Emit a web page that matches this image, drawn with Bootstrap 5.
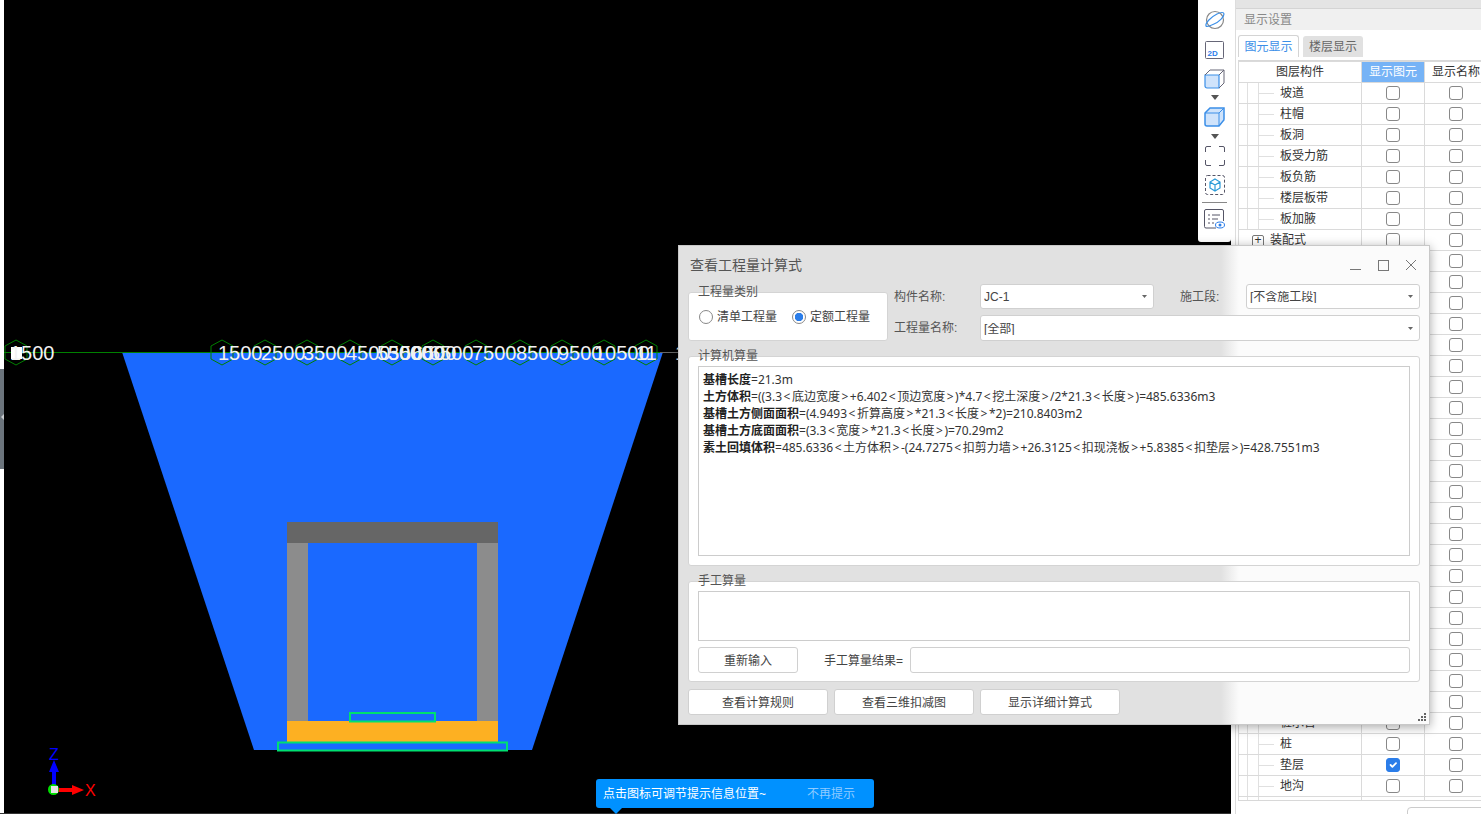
<!DOCTYPE html>
<html lang="zh">

<head>
    <meta charset="UTF-8" />
    <meta name="viewport" content="width=device-width, initial-scale=1" />
    <title>查看工程量计算式</title>
    <link href="https://cdn.jsdelivr.net/npm/bootstrap@5.3.0/dist/css/bootstrap.min.css" rel="stylesheet" />
    <style>
        body { font-family: "Liberation Sans", "Noto Sans CJK SC", sans-serif; font-size: 12px; color: #333; background: #000; overflow: hidden; height: 814px; }
        .edge-strip { width: 4px; background: #fff; height: 813px; padding-top: 369px; flex: none; }
        .edge-handle { height: 100px; background: #6c757d; position: relative; }
        .edge-handle::after { content: ""; position: absolute; left: 1px; top: 45px; border: 3px solid transparent; border-right: 3px solid #c8ccd0; border-left: 0; }
        .cad-area { width: 1194px; height: 813px; flex: none; }
        .cad-area svg { display: block; }
        .axis-num { font: 20px "Liberation Sans", sans-serif; fill: #f2f2f2; }
        .side-tools { width: 33px; height: 242px; flex: none; background: #fff; border-radius: 0 0 3px 3px; padding-top: 8px; }
        .side-tools svg { display: block; margin-left: auto; margin-right: auto; flex: none; }
        .tool-m6 { margin-top: 6px; }
        .tool-m7 { margin-top: 7px; }
        .tool-m9 { margin-top: 9px; }
        .tool-m10 { margin-top: 10px; }
        .tool-sep { border-top: 1px solid #888; margin: 7px 4px 0; }
        .side-panel { width: 250px; flex: none; height: 814px; background: #fff; padding-left: 4px; overflow: hidden; }
        .panel-inner { border-left: 1px solid #ddd; height: 814px; width: 246px; }
        .panel-top { height: 9px; background: #e4e4e4; border-bottom: 1px solid #d4d4d4; }
        .panel-head { height: 21px; line-height: 22px; background: #f0f0f0; color: #888; padding-left: 8px; }
        .tab-row { margin: 5px 0 3px 2px; height: 22px; }
        .tab-on, .tab-off { width: 61px; text-align: center; line-height: 23px; border-radius: 3px 3px 0 0; }
        .tab-on { border: 1px solid #d4d4d4; border-bottom: 0; color: #3b8fe8; }
        .tab-off { width: 60px; margin-top: 1px; line-height: 23px; background: #e1e1e1; color: #666; }
        .tree-box { margin-left: 2px; width: 260px; height: 741px; overflow: hidden; border-top: 1px solid #d8d8d8; border-bottom: 1px solid #d8d8d8; }
        .tree-table { table-layout: fixed; width: 249px; font-size: 12px; color: #333; --bs-table-border-color: #dadada; }
        .tree-table td, .tree-table th { height: 21px; padding: 0; line-height: 20px; font-weight: 400; vertical-align: middle; }
        .tree-head-on { background: #76b3f6 !important; --bs-table-bg: #76b3f6; color: #fff !important; text-align: center; }
        .tree-leaf { padding-left: 41px !important; background-image: linear-gradient(#e0e0e0, #e0e0e0), linear-gradient(#e0e0e0, #e0e0e0), linear-gradient(#e0e0e0, #e0e0e0); background-repeat: no-repeat; background-size: 1px 100%, 1px 100%, 16px 1px; background-position: 8px 0, 19px 0, 19px 50%; }
        .tree-root { padding-left: 13px !important; }
        .plus-box { display: inline-block; width: 12px; height: 12px; line-height: 9px; border: 1px solid #777; border-radius: 2px; text-align: center; margin-right: 6px; vertical-align: 0; font-size: 12px; }
        .tick-box { width: 14px; height: 14px; margin: -1px auto 0; border: 1px solid #888; border-radius: 3px; display: block; }
        .tick-box:checked { background-color: #2b7de9; border-color: #2b7de9; }
        .panel-btn { margin: 6px 0 0 171px; width: 80px; height: 20px; border: 1px solid #ccc; border-radius: 4px; }
        .calc-dialog { position: absolute; left: 678px; top: 245px; width: 752px; height: 480px; border: 1px solid #c8c8c8; box-shadow: 0 2px 10px rgba(0, 0, 0, .35); background: linear-gradient(90deg, #e1e1e1 542px, #fbfbfb 560px); color: #444; }
        .dlg-title { height: 38px; padding: 0 4px 0 11px; font-size: 14px; color: #555; }
        .dlg-body { padding: 0 9px; }
        .win-btn { width: 28px; text-align: center; }
        .win-btn svg { display: block; margin: 0 auto; }
        .top-block { height: 57px; gap: 6px; }
        .grp { background: #fff; border: 1px solid #d4d4d4; border-radius: 3px; padding: 9px; }
        .grp-title { display: block; width: fit-content; line-height: 16px; margin: -18px 0 2px; color: #555; }
        .grp-type { width: 200px; height: 49px; margin-top: 8px; flex: none; }
        .radio-line { height: 28px; gap: 15px; padding: 2px 0 0 1px; }
        .radio-line label { display: flex; align-items: center; gap: 4px; color: #444; }
        .dot-radio { width: 14px; height: 14px; margin: 0; border: 1px solid #888; }
        .dot-radio:checked { background-color: #fff; border-color: #888; background-image: radial-gradient(circle, #2b7de9 0 4px, transparent 4.5px); }
        .field-col { flex: 1; gap: 6px; }
        .field-row { height: 25px; }
        .field-row + .field-row { height: 26px; }
        .field-name { width: 86px; flex: none; color: #555; }
        .field-name-2 { width: 66px; padding-left: 26px; box-sizing: content-box; color: #555; flex: none; }
        .combo { height: 100%; padding: 1px 3px 0; font-size: 12px; line-height: 1; color: #444; border: 1px solid #d0d0d0; border-radius: 3px; background-size: 5px 3px; background-position: right 6px center; background-image: url("data:image/svg+xml,%3csvg xmlns='http://www.w3.org/2000/svg' viewBox='0 0 7 4'%3e%3cpath fill='%23666' d='M0 0h7L3.500 4z'/%3e%3c/svg%3e"); }
        .combo-short { width: 174px; flex: none; }
        .grp-calc { height: 210px; margin-top: 15px; }
        .calc-text { height: 190px; border: 1px solid #ccc; padding: 4px 4px; line-height: 17px; color: #333; white-space: nowrap; overflow: hidden; background: #fff; font-family: "Noto Sans", "Noto Sans CJK SC", sans-serif; }
        .calc-text b { color: #222; }
        .ang { padding: 0 1.500px; }
        .grp-hand { height: 101px; margin-top: 15px; }
        .hand-box { height: 50px; border: 1px solid #ccc; }
        .hand-row { height: 26px; margin-top: 6px; }
        .plain-btn { --bs-btn-font-size: 12px; --bs-btn-padding-y: 0; --bs-btn-padding-x: 0; --bs-btn-color: #444; --bs-btn-border-color: #d0d0d0; --bs-btn-bg: #fff; --bs-btn-border-radius: 3px; height: 26px; padding-top: 2px; }
        .hand-btn { width: 100px; }
        .hand-label { margin-left: 26px; width: 86px; padding-top: 1px; }
        .hand-input { flex: 1; border: 1px solid #d0d0d0; border-radius: 3px; height: 26px; background: #fff; }
        .foot-row { margin-top: 7px; gap: 6px; }
        .foot-btn { width: 140px; }
        .grip { position: absolute; right: 3px; bottom: 3px; display: block; }
        .tip-bar { position: absolute; left: 596px; top: 779px; width: 278px; height: 29px; background: #0091ff; border-radius: 3px; color: #fff; padding-left: 7px; }
        .tip-bar::after { content: ""; position: absolute; left: 14px; top: 29px; border: 6px solid transparent; border-top: 6px solid #0091ff; border-bottom: 0; }
        .tip-off { margin-left: auto; margin-right: 19px; color: #8fcbff; }
        .base-line { position: absolute; left: 0; top: 813px; width: 1231px; height: 1px; background: #333; }
    </style>
</head>

<body>
    <div class="d-flex">
        <div class="edge-strip"><div class="edge-handle"></div></div>

        <div class="cad-area">
            <svg width="1194" height="813" viewBox="4 0 1194 813">
                <rect x="4" y="0" width="1194" height="813" fill="#000" />
                <polygon points="122,352 663,352 532,750 254,750" fill="#1a69ff" />
                <line x1="109" y1="352.500" x2="678" y2="352.500" stroke="#666" />
                <line x1="4" y1="352.500" x2="660" y2="352.500" stroke="#008000" />
                <rect x="287" y="522" width="211" height="21" fill="#666" />
                <rect x="287" y="543" width="21" height="178" fill="#8c8c8c" />
                <rect x="477" y="543" width="21" height="178" fill="#8c8c8c" />
                <rect x="287" y="721" width="211" height="21" fill="#fdb022" />
                <rect x="350" y="713" width="85" height="8.500" fill="none" stroke="#00e070" stroke-width="2" />
                <rect x="278" y="742.500" width="229" height="8" fill="none" stroke="#00e070" stroke-width="2" />
                <g id="axisBubbles" fill="none" stroke="#008000"></g>
                <rect x="11" y="347" width="11" height="12" fill="#fff" />
                <g id="axisLabels"></g>
                <g>
                    <rect x="52" y="770" width="4" height="15" fill="#00f" />
                    <polygon points="54,760 59,772 49,772" fill="#00f" />
                    <rect x="57" y="788" width="16" height="4" fill="#f00" />
                    <polygon points="84,790 72,785 72,795" fill="#f00" />
                    <circle cx="53.500" cy="789.500" r="5.500" fill="#00e000" />
                    <rect x="51" y="786" width="7" height="7" fill="#e4e4e4" />
                    <text x="49" y="760" font-size="16" fill="#00f" font-family="Liberation Sans">Z</text>
                    <text x="85" y="796" font-size="16" fill="#f00" font-family="Liberation Sans">X</text>
                </g>
            </svg>
        </div>

        <div class="side-tools d-flex flex-column">
            <svg width="24" height="24" viewBox="0 0 24 24" fill="none">
                <circle cx="12" cy="12" r="8.500" stroke="#888" stroke-width="1.200" />
                <path d="M3 18C2 15 8 9 14 6c4-2 7-2 7 0 0 3-5 8-10 10-4 2-7 3-8 2z" stroke="#3b8fe8" stroke-width="1.200" />
            </svg>
            <svg class="tool-m9" width="20" height="18" viewBox="0 0 20 18" fill="none">
                <rect x=".5" y=".5" width="18" height="17" rx="1" stroke="#667" />
                <text x="2.500" y="14.500" font-size="8" font-weight="700" fill="#2b7de9" font-family="Liberation Sans">2D</text>
            </svg>
            <svg class="tool-m10" width="22" height="20" viewBox="0 0 22 20" fill="none">
                <path d="M1 6h14v13H3a2 2 0 0 1-2-2z" fill="#cfe3fb" stroke="#3b8fe8" stroke-width="1.200" />
                <path d="M1 6l5-5h14v13l-5 5M15 6l5-5" stroke="#667" />
            </svg>
            <svg class="tool-m6" width="8" height="5" viewBox="0 0 8 5"><path d="M0 0h8L4 5z" fill="#555" /></svg>
            <svg class="tool-m7" width="22" height="20" viewBox="0 0 22 20" fill="none">
                <path d="M1 6l5-5h14v11a2 2 0 0 1-1 2l-4 5H3a2 2 0 0 1-2-2z" fill="#cfe3fb" stroke="#3b8fe8" stroke-width="1.500" />
                <path d="M1 6h14v13M15 6l5-5" stroke="#3b8fe8" />
            </svg>
            <svg class="tool-m7" width="8" height="5" viewBox="0 0 8 5"><path d="M0 0h8L4 5z" fill="#555" /></svg>
            <svg class="tool-m7" width="20" height="20" viewBox="0 0 20 20" fill="none" stroke="#556">
                <path d="M.5 6V2A1.500 1.500 0 0 1 2 .5h4M14 .5h4A1.500 1.500 0 0 1 19.500 2v4M19.500 14v4a1.500 1.500 0 0 1-1.500 1.500h-4M6 19.500H2A1.500 1.500 0 0 1 .5 18v-4" />
            </svg>
            <svg class="tool-m9" width="20" height="20" viewBox="0 0 20 20" fill="none">
                <rect x=".5" y=".5" width="19" height="19" rx="2" stroke="#556" stroke-dasharray="3 2" />
                <path d="M10 4l5 3v6l-5 3-5-3V7zM5 7l5 3 5-3M10 10v6" stroke="#2b9bd8" stroke-width="1.200" />
            </svg>
            <div class="tool-sep"></div>
            <svg class="tool-m6" width="21" height="20" viewBox="0 0 21 20" fill="none">
                <path d="M12 19H2a1.500 1.500 0 0 1-1.500-1.500V2A1.500 1.500 0 0 1 2 .5h16A1.500 1.500 0 0 1 19.500 2v10" stroke="#556" />
                <path d="M4 6h2M8 6h8M4 10h2M8 10h6M4 14h2M8 14h2" stroke="#556" />
                <ellipse cx="16" cy="16" rx="4.500" ry="3" fill="#fff" stroke="#2b7de9" />
                <circle cx="16" cy="16" r="1.500" fill="#2b7de9" />
            </svg>
        </div>

        <div class="side-panel">
            <div class="panel-inner">
                <div class="panel-top"></div>
                <div class="panel-head">显示设置</div>
                <div class="tab-row d-flex gap-1">
                    <div class="tab-on">图元显示</div>
                    <div class="tab-off">楼层显示</div>
                </div>
                <div class="tree-box">
                    <table class="table table-bordered mb-0 tree-table">
                        <colgroup><col style="width:123px"><col style="width:63px"><col style="width:63px"></colgroup>
                        <thead>
                            <tr>
                                <th class="text-center">图层构件</th>
                                <th class="tree-head-on">显示图元</th>
                                <th class="text-center">显示名称</th>
                            </tr>
                        </thead>
                        <tbody id="treeRows"></tbody>
                    </table>
                </div>
                <div class="panel-btn"></div>
            </div>
        </div>
    </div>
    <div class="base-line"></div>

    <div class="calc-dialog">
        <div class="dlg-title d-flex align-items-center">
            <span class="me-auto">查看工程量计算式</span>
            <span class="win-btn"><svg width="11" height="11" viewBox="0 0 11 11"><path d="M0 9.500h11" stroke="#777" /></svg></span>
            <span class="win-btn"><svg width="11" height="11" viewBox="0 0 11 11"><rect x=".5" y=".5" width="10" height="10" fill="none" stroke="#777" /></svg></span>
            <span class="win-btn"><svg width="12" height="12" viewBox="0 0 12 12"><path d="M1 1l10 10M11 1L1 11" stroke="#777" /></svg></span>
        </div>
        <div class="dlg-body">
            <div class="top-block d-flex">
                <div class="grp grp-type">
                    <span class="grp-title">工程量类别</span>
                    <div class="radio-line d-flex align-items-center">
                        <label><input class="form-check-input dot-radio" type="radio" name="qtyType">清单工程量</label>
                        <label><input class="form-check-input dot-radio" type="radio" name="qtyType" checked>定额工程量</label>
                    </div>
                </div>
                <div class="field-col d-flex flex-column">
                    <div class="field-row d-flex align-items-center">
                        <span class="field-name">构件名称:</span>
                        <select class="form-select combo combo-short"><option>JC-1</option></select>
                        <span class="field-name-2">施工段:</span>
                        <select class="form-select combo combo-short"><option>[不含施工段]</option></select>
                    </div>
                    <div class="field-row d-flex align-items-center">
                        <span class="field-name">工程量名称:</span>
                        <select class="form-select combo flex-fill w-auto"><option>[全部]</option></select>
                    </div>
                </div>
            </div>

            <div class="grp grp-calc">
                <span class="grp-title">计算机算量</span>
                <div class="calc-text" id="calcText">
                    <b>基槽长度</b>=21.3m<br>
                    <b>土方体积</b>=((3.3&lt;底边宽度&gt;+6.402&lt;顶边宽度&gt;)*4.7&lt;挖土深度&gt;/2*21.3&lt;长度&gt;)=485.6336m3<br>
                    <b>基槽土方侧面面积</b>=(4.9493&lt;折算高度&gt;*21.3&lt;长度&gt;*2)=210.8403m2<br>
                    <b>基槽土方底面面积</b>=(3.3&lt;宽度&gt;*21.3&lt;长度&gt;)=70.29m2<br>
                    <b>素土回填体积</b>=485.6336&lt;土方体积&gt;-(24.7275&lt;扣剪力墙&gt;+26.3125&lt;扣现浇板&gt;+5.8385&lt;扣垫层&gt;)=428.7551m3
                </div>
            </div>

            <div class="grp grp-hand">
                <span class="grp-title">手工算量</span>
                <div class="hand-box"></div>
                <div class="hand-row d-flex align-items-center">
                    <button type="button" class="btn plain-btn hand-btn">重新输入</button>
                    <span class="hand-label">手工算量结果=</span>
                    <div class="hand-input"></div>
                </div>
            </div>

            <div class="foot-row d-flex">
                <button type="button" class="btn plain-btn foot-btn">查看计算规则</button>
                <button type="button" class="btn plain-btn foot-btn">查看三维扣减图</button>
                <button type="button" class="btn plain-btn foot-btn">显示详细计算式</button>
            </div>
        </div>
        <svg class="grip" width="8" height="8" viewBox="0 0 8 8" fill="#666">
            <rect x="6" y="0" width="2" height="2" /><rect x="3" y="3" width="2" height="2" /><rect x="6" y="3" width="2" height="2" />
            <rect x="0" y="6" width="2" height="2" /><rect x="3" y="6" width="2" height="2" /><rect x="6" y="6" width="2" height="2" />
        </svg>
    </div>

    <div class="tip-bar d-flex align-items-center">
        <span>点击图标可调节提示信息位置~</span>
        <span class="tip-off">不再提示</span>
    </div>

    <script>
        // 轴网:圆圈中心和标注位置
        const bubbles = [16, 222, 265, 307, 350, 392, 433, 476, 520, 562, 604, 646];
        const labels = [
            ['1500', 10], ['1500', 218], ['2500', 261], ['3500', 303], ['4500', 346],
            ['5500', 377], ['3000', 388], ['5000', 400], ['6500', 412], ['6500', 429],
            ['7500', 472], ['8500', 516], ['9500', 558], ['10500', 594], ['11', 636], ['1', 675]
        ];
        const ns = 'http://www.w3.org/2000/svg';

        bubbles.forEach(x => {
            const hex = document.createElementNS(ns, 'polygon');
            hex.setAttribute('points', `${x},340 ${x + 11},346 ${x + 11},359 ${x},365 ${x - 11},359 ${x - 11},346`);
            document.getElementById('axisBubbles').appendChild(hex);
        });

        labels.forEach(([txt, x]) => {
            const t = document.createElementNS(ns, 'text');
            t.setAttribute('x', x);
            t.setAttribute('y', 360);
            t.setAttribute('class', 'axis-num');
            t.textContent = txt;
            document.getElementById('axisLabels').appendChild(t);
        });

        // 尖括号两边留点空
        const calcText = document.getElementById('calcText');
        calcText.innerHTML = calcText.innerHTML.replace(/&lt;|&gt;/g, m => `<span class="ang">${m}</span>`);

        // 构件树
        const names = ['坡道', '柱帽', '板洞', '板受力筋', '板负筋', '楼层板带', '板加腋', '+装配式'];
        const total = 35;
        let html = '';
        for (let i = 0; i < total; i++) {
            let name = names[i] || '';
            if (i === 30) name = '桩承台';
            if (i === 31) name = '桩';
            if (i === 32) name = '垫层';
            if (i === 33) name = '地沟';
            const first = name.startsWith('+')
                ? `<td class="tree-root"><span class="plus-box">+</span>${name.slice(1)}</td>`
                : `<td class="tree-leaf">${name}</td>`;
            const on = i === 32 ? ' checked' : '';
            html += `<tr>${first}<td><input class="form-check-input tick-box" type="checkbox"${on}></td><td><input class="form-check-input tick-box" type="checkbox"></td></tr>`;
        }
        document.getElementById('treeRows').innerHTML = html;
    </script>

    <script src="https://cdn.jsdelivr.net/npm/bootstrap@5.3.0/dist/js/bootstrap.bundle.min.js"></script>
</body>

</html>
